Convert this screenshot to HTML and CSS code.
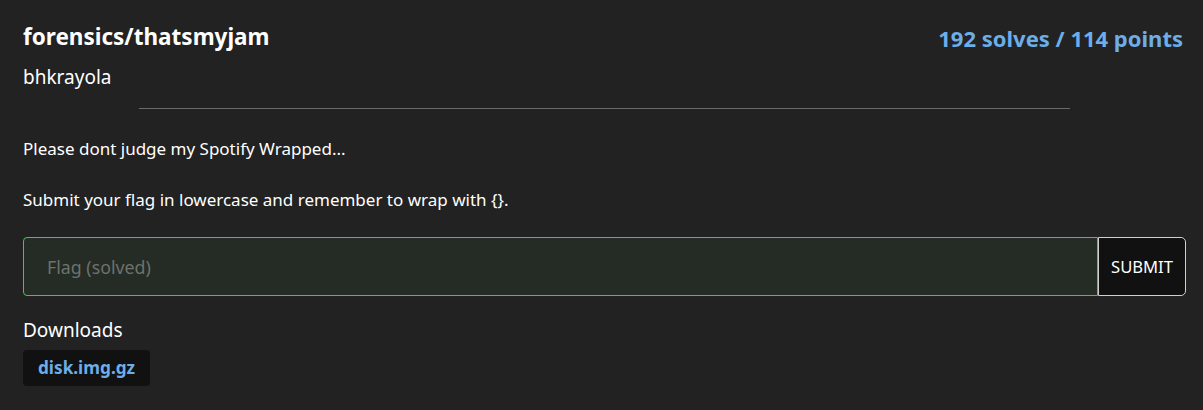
FILE: index.html
```html
<!DOCTYPE html>
<html>
<head>
<meta charset="utf-8">
<link rel="stylesheet" href="styles.css">
</head>
<body>
<div class="card">
  <div class="head">
    <div>
      <div class="title">forensics/thatsmyjam</div>
      <div class="author">bhkrayola</div>
    </div>
    <div class="score">192 solves / 114 points</div>
  </div>
  <hr class="rule">
  <p class="desc">Please dont judge my Spotify Wrapped...</p>
  <p class="desc">Submit your flag in lowercase and remember to wrap with {}.</p>
  <form class="flagform">
    <div class="flagbox"><input class="flag" type="text" placeholder="Flag (solved)" readonly></div>
    <button class="submit" type="button">SUBMIT</button>
  </form>
  <div class="dl-title">Downloads</div>
  <div class="files"><a class="file">disk.img.gz</a></div>
</div>
</body>
</html>
```
FILE: styles.css
```css
html, body {
  margin: 0;
  background: #222222;
  color: #ffffff;
  font-family: "Noto Sans", "Open Sans", sans-serif;
}
.card {
  padding: 18px 17px 20px 23px;
}
.head {
  display: flex;
  justify-content: space-between;
  align-items: flex-start;
}
.title {
  font-size: 22.5px;
  font-weight: 700;
  line-height: 38px;
}
.author {
  font-size: 19px;
  line-height: 28px;
  margin-top: 7px;
}
.score {
  font-size: 22px;
  font-weight: 700;
  color: #6caee8;
  line-height: 42px;
  margin-top: -1px;
  margin-right: 3px;
}
.rule {
  width: 80%;
  border: 0;
  border-top: 1px solid #6a6a6a;
  margin: 17px auto 26px;
}
.desc {
  margin: 0 0 23px;
  font-size: 17px;
  line-height: 28px;
}
.flagform {
  display: flex;
  margin-top: 16px;
}
.flagbox {
  flex: 1;
  display: flex;
  height: 59px;
  box-sizing: border-box;
  background: #252b25;
  border: 1px solid #3ec94a;
  border-right-color: #3ec94a;
  border-radius: 4px 0 0 4px;
}
.flag {
  flex: 1;
  min-width: 0;
  background: transparent;
  border: 0;
  padding: 0 23px;
  font-family: inherit;
  font-size: 17.8px;
  color: #fff;
  outline: none;
}
.flag::placeholder {
  color: #6d726d;
}
.submit {
  width: 88px;
  height: 59px;
  box-sizing: border-box;
  background: #111111;
  color: #fff;
  border: 1px solid #d0d0d0;
  border-radius: 0 5px 5px 0;
  font-family: inherit;
  font-size: 16.6px;
  padding: 0;
}
.dl-title {
  margin-top: 20px;
  font-size: 19px;
  line-height: 28px;
}
.files {
  margin-top: 6px;
  display: flex;
}
.file {
  background: #111111;
  color: #6caee8;
  font-weight: 700;
  font-size: 17.2px;
  line-height: 36px;
  padding: 0 15px;
  border-radius: 4px;
}
```
